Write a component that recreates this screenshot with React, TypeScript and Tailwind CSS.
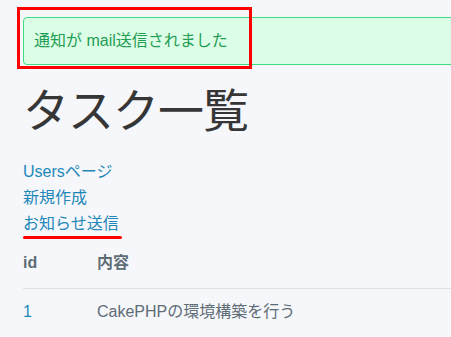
export default function App() {
  return (
    <div className="relative min-h-[337px] w-[451px] overflow-hidden bg-[#f5f7fa] text-[16px] text-[#606c76] [font-family:'Liberation_Sans','Noto_Sans_CJK_JP',sans-serif]">
      <div className="px-[23px] pt-[17px]">
        {/* flash message */}
        <div className="w-[520px] rounded-[4px] border border-[#3ddc84] bg-[#dcfde6] px-[10px] py-[10px] leading-[26px] text-[#1f9d55]">
          通知が mail送信されました
        </div>

        <h1 className="mt-[19px] text-[46px] leading-[55px] tracking-[-1px] text-[#363637]">タスク一覧</h1>

        <div className="mt-[20px] flex flex-col items-start leading-[26px] text-[#1f87b8]">
          <a href="#">Usersページ</a>
          <a href="#">新規作成</a>
          <a href="#" className="relative">
            お知らせ送信
            <span className="absolute left-0 top-[25px] h-[3px] w-[99px] rounded-full bg-[#ff0000]" />
          </a>
        </div>

        <table className="mt-[13px] w-[500px] border-collapse text-left leading-[26px]">
          <thead>
            <tr className="border-b border-[#e1e1e1]">
              <th className="w-[74px] pb-[12px] font-bold">id</th>
              <th className="pb-[12px] font-bold">内容</th>
            </tr>
          </thead>
          <tbody>
            <tr>
              <td className="pt-[10px] text-[#1f87b8]">1</td>
              <td className="pt-[10px]">CakePHPの環境構築を行う</td>
            </tr>
          </tbody>
        </table>
      </div>

      {/* red annotation frame */}
      <div className="absolute left-[17px] top-[7px] h-[62px] w-[235px] border-[3px] border-[#ff0000]" />
    </div>
  );
}
